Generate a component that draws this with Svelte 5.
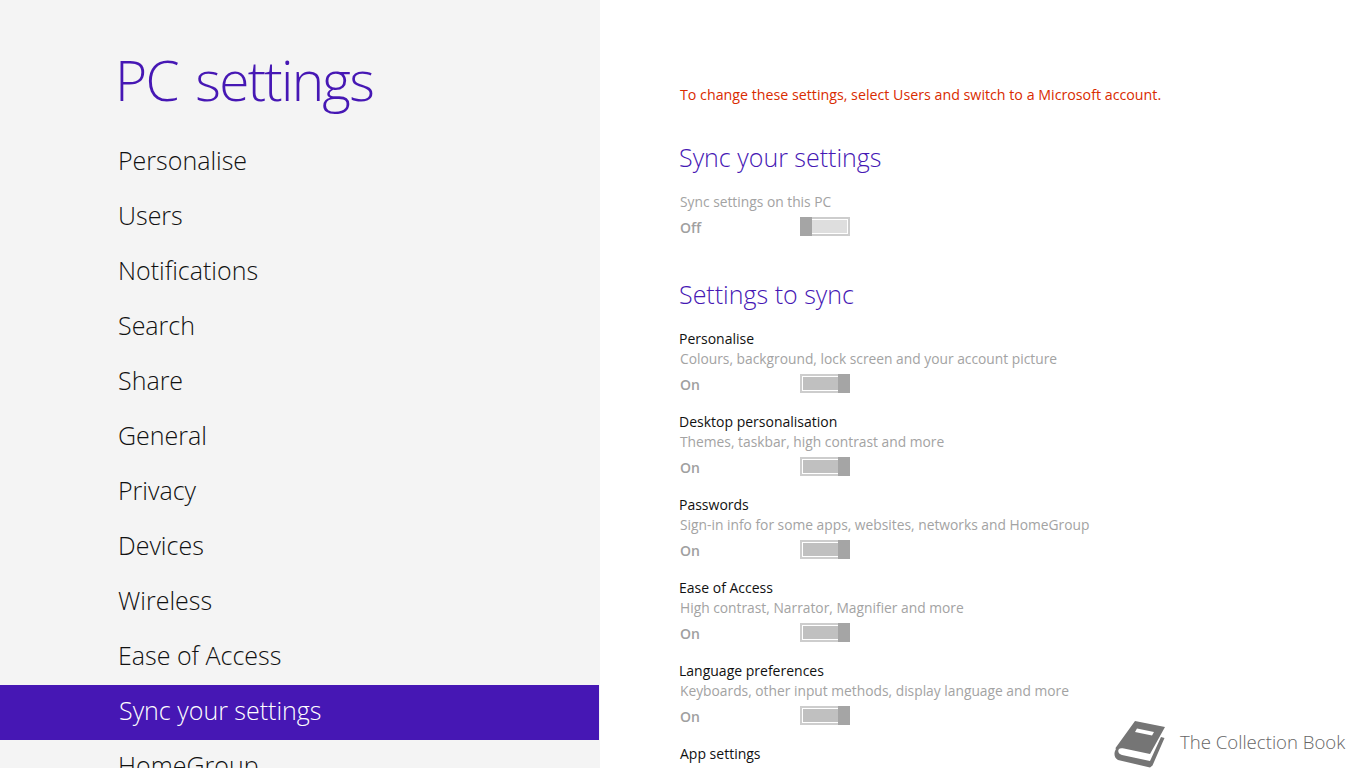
<script>
  const nav = ['Personalise','Users','Notifications','Search','Share','General','Privacy','Devices','Wireless','Ease of Access','Sync your settings','HomeGroup'];
  const items = [
    ['Personalise','Colours, background, lock screen and your account picture'],
    ['Desktop personalisation','Themes, taskbar, high contrast and more'],
    ['Passwords','Sign-in info for some apps, websites, networks and HomeGroup'],
    ['Ease of Access','High contrast, Narrator, Magnifier and more'],
    ['Language preferences','Keyboards, other input methods, display language and more']
  ];
</script>

<div class="page">
  <aside class="side">
    <h1>PC settings</h1>
    <nav>
      {#each nav as n}
        <div class="nav-item" class:active={n === 'Sync your settings'}>{n}</div>
      {/each}
    </nav>
  </aside>
  <main class="content">
    <p class="warn">To change these settings, select Users and switch to a Microsoft account.</p>
    <h2 class="first">Sync your settings</h2>
    <div class="desc">Sync settings on this PC</div>
    <div class="row">
      <span class="state">Off</span>
      <span class="toggle off"><i class="thumb"></i><i class="fill"></i></span>
    </div>
    <h2 class="second">Settings to sync</h2>
    {#each items as it}
      <div class="item">
        <div class="name">{it[0]}</div>
        <div class="desc">{it[1]}</div>
        <div class="row">
          <span class="state">On</span>
          <span class="toggle on"><i class="fill"></i><i class="thumb"></i></span>
        </div>
      </div>
    {/each}
    <div class="name last">App settings</div>
  </main>
  <div class="brand">
    <svg width="54" height="48" viewBox="0 0 54 48" aria-hidden="true">
      <path fill="#757575" d="M21 1 L51 7 L36 34 L10 28.500 C6 27.500 3.500 29 2.500 31 L1.500 28 Z"/>
      <path fill="#757575" d="M2 29 C-0.500 33 0 38 4 40 L36 47.500 L38.500 45.500 L50.500 18 L47 17 L36 41 L8 35 C4 34 3 30 6 28 Z"/>
      <path fill="#fff" d="M23 8.500 L40 12 L38 15.500 L21 12 Z"/>
    </svg>
    <span>The Collection Book</span>
  </div>
</div>

<style>
  :global(body) { margin: 0; background: #fff; }
  .page {
    position: relative;
    display: flex;
    width: 1366px;
    height: 768px;
    overflow: hidden;
    font-family: "Open Sans", "Noto Sans", sans-serif;
  }
  .side {
    width: 600px;
    flex: none;
    height: 768px;
    background: #f4f4f4;
    overflow: hidden;
  }
  h1 {
    margin: 0;
    height: 135px;
    box-sizing: border-box;
    padding: 44px 0 0 115px;
    font-size: 55px;
    line-height: 72px;
    font-weight: 300;
    letter-spacing: -1.75px;
    word-spacing: 5px;
    color: #4617b4;
  }
  .nav-item {
    height: 55px;
    width: 599px;
    box-sizing: border-box;
    padding: 6px 0 0 118px;
    font-size: 25px;
    line-height: 38px;
    font-weight: 300;
    color: #111;
  }
  .nav-item.active {
    background: #4617b4;
    color: #fff;
    padding-left: 119px;
  }
  .content {
    padding: 85px 0 0 680px;
    margin-left: -600px;
    flex: 1;
    min-width: 0;
  }
  .warn {
    margin: 0;
    font-size: 14.24px;
    line-height: 20px;
    color: #d92b00;
    white-space: nowrap;
  }
  h2 {
    margin: 0 0 0 -1px;
    font-size: 25px;
    line-height: 34px;
    font-weight: 300;
    color: #4617b4;
  }
  h2.first { margin-top: 35px; }
  h2.second { margin-top: 35px; margin-bottom: 18px; }
  .first + .desc { margin-top: 18px; }
  .name {
    font-size: 14px;
    line-height: 20px;
    color: #111;
    margin-left: -1px;
  }
  .name.last { margin-left: 0; }
  .desc {
    font-size: 13.8px;
    line-height: 20px;
    color: #a3a3a3;
  }
  .row {
    display: flex;
    align-items: center;
    height: 30px;
  }
  .state {
    width: 120px;
    font-size: 14px;
    font-weight: 600;
    color: #a0a0a0;
  }
  .item { height: 83px; }
  .toggle {
    display: flex;
    width: 50px;
    height: 19px;
    margin-bottom: 2px;
    box-sizing: border-box;
    border: 2px solid #cdcdcd;
    background: #fff;
  }
  .thumb {
    width: 12px;
    margin: -2px;
    background: #a5a5a5;
    flex: none;
  }
  .fill { flex: 1; margin: 1px; background: #dedede; }
  .on .fill { background: #c0c0c0; margin-right: 2px; }
  .off .fill { margin-left: 2px; }
  .brand {
    position: absolute;
    left: 1114px;
    top: 720px;
    display: flex;
    align-items: flex-start;
    gap: 12px;
  }
  .brand span {
    font-size: 18.6px;
    line-height: 44px;
    font-weight: 300;
    color: #666;
  }
</style>
